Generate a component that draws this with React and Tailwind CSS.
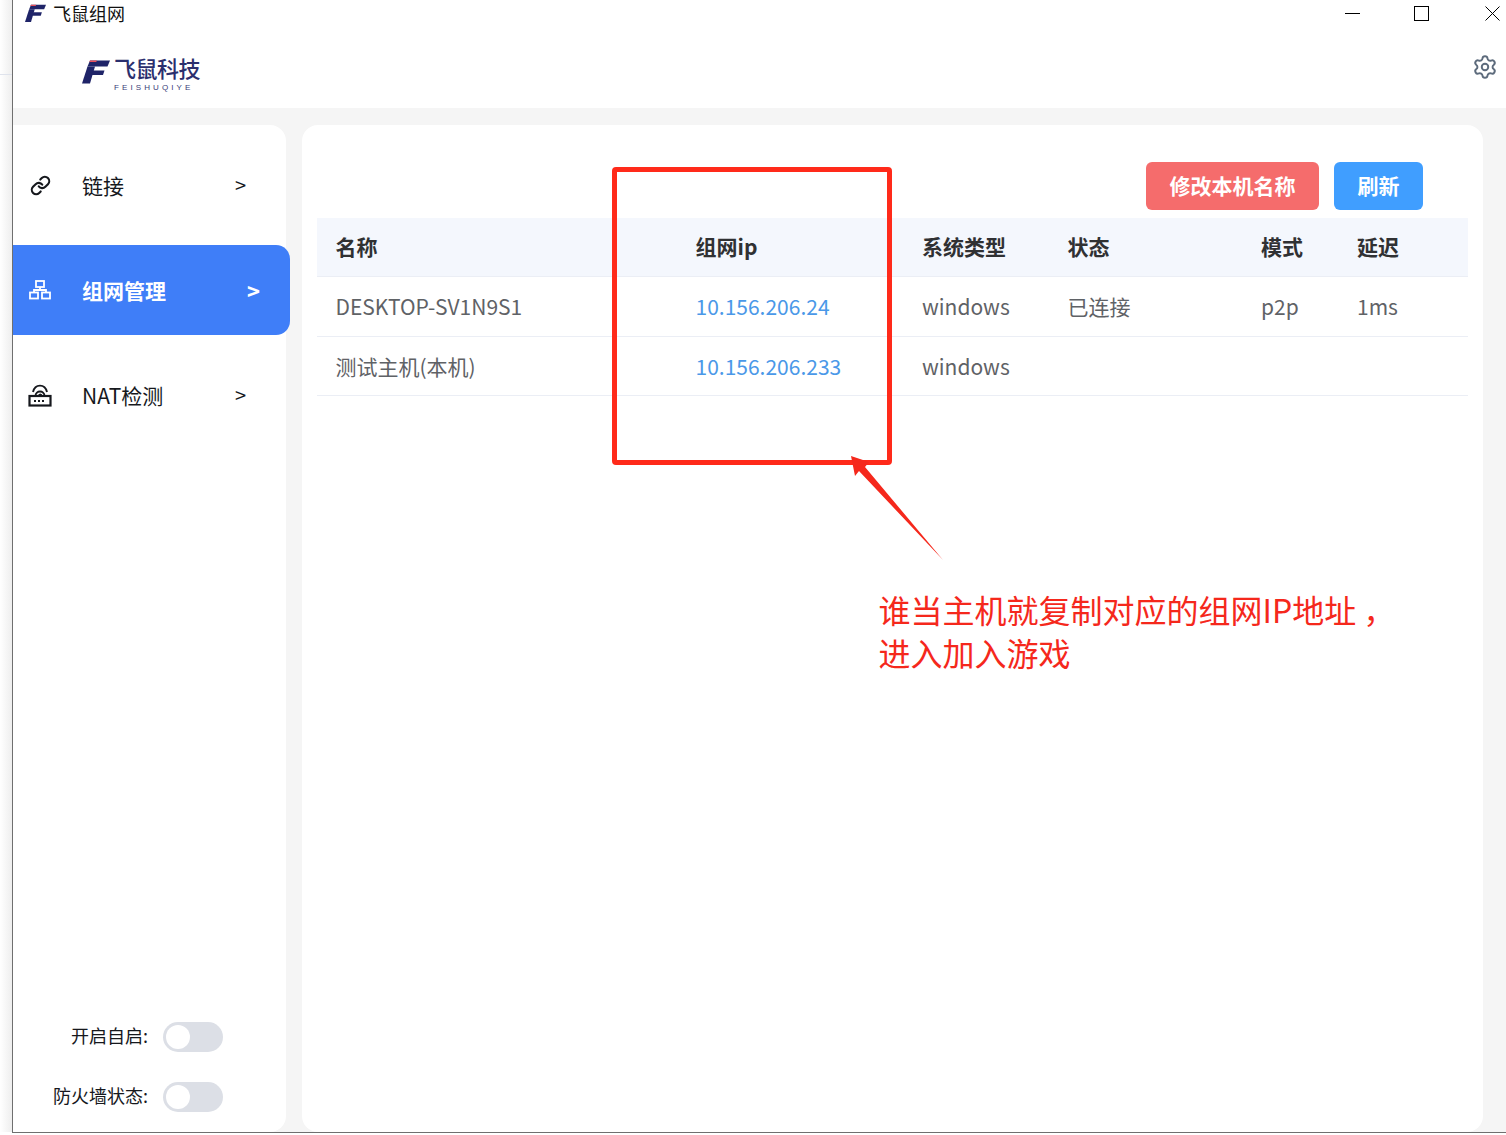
import { Link, Settings } from 'lucide-react'

const cjk = "font-['Noto_Sans_CJK_SC','Noto_Sans',sans-serif]"

const columns = ['w-[360px] pl-[18.5px]', 'w-[226px] pl-[18.5px]', 'w-[146px] pl-[19px]', 'w-[193px] pl-[18.5px]', 'w-[96px] pl-[19px]', 'w-[130px] pl-[19px]']
const headers = ['名称', '组网ip', '系统类型', '状态', '模式', '延迟']
const rows = [
  ['DESKTOP-SV1N9S1', '10.156.206.24', 'windows', '已连接', 'p2p', '1ms'],
  ['测试主机(本机)', '10.156.206.233', 'windows', '', '', ''],
]

function LogoMark({ className }) {
  return (
    <svg viewBox="0 0 28 24" className={className}>
      <path d="M8 1 L5.5 7 L25.5 7 L28 1 Z" fill="#1f2468" />
      <path d="M8 1 L15 1 L14.2 2.6 L7.3 2.6 Z" fill="#e8505b" />
      <path d="M5.5 7 L13 7 L8 24 L0 24 Z" fill="#1f2468" />
      <path d="M11 11 L22.5 11 L21 15.5 L9.5 15.5 Z" fill="#1f2468" />
    </svg>
  )
}

function NetworkIcon() {
  return (
    <svg viewBox="0 0 22 20" className="w-[22px] h-[20px]" fill="none" stroke="currentColor" strokeWidth="1.8">
      <rect x="7" y="1" width="8" height="6" />
      <rect x="1" y="12.5" width="8" height="6" />
      <rect x="13" y="12.5" width="8" height="6" />
      <path d="M11 7 V10 M5 12.5 V10 H17 V12.5" />
    </svg>
  )
}

function RouterIcon() {
  return (
    <svg viewBox="0 0 24 23" className="w-[24px] h-[23px]" fill="none" stroke="currentColor" strokeWidth="2.2">
      <rect x="1.5" y="12" width="21" height="9.5" />
      <path d="M7.5 12 C7.5 6 16.5 6 16.5 12 M11 12 C11 9.8 13.5 9.8 13.5 12 M5 8 C7 -0.5 17 -0.5 19 8" strokeWidth="1.9" />
      <path d="M6 17 H8 M10 17 H12 M14 17 H16" strokeWidth="1.8" />
    </svg>
  )
}

function NavItem({ icon, label, active }) {
  return (
    <div
      className={
        active
          ? 'flex items-center h-[90px] w-[277px] pl-[15px] rounded-r-[14px] bg-[#3f7ef8] text-white font-bold'
          : 'flex items-center h-[90px] w-[273px] pl-[15px] text-[#16181d]'
      }
    >
      <span className="w-[24px] flex justify-center">{icon}</span>
      <span className="ml-[30px] text-[21px] leading-none w-[151px]">{label}</span>
      <span className={active ? 'text-[22px] leading-none ml-[14px]' : 'text-[20px] leading-none ml-[2px]'}>&gt;</span>
    </div>
  )
}

function Toggle({ label }) {
  return (
    <div className="flex items-center justify-end h-[30px] w-[210px]">
      <span className="text-[18px] leading-none text-[#16181d] mr-[15px] pb-[4px]">{label}</span>
      <span className="w-[60px] h-[30px] rounded-full bg-[#dcdfe6] p-[3px] flex">
        <span className="w-[24px] h-[24px] rounded-full bg-white" />
      </span>
    </div>
  )
}

export default function App() {
  return (
    <div className={`${cjk} relative w-[1506px] h-[1135px] overflow-hidden bg-white flex`}>
      {/* window shadow on the left */}
      <div className="w-[12px] h-[1132px] flex flex-col bg-gradient-to-r from-white to-[#eeeeee]">
        <div className="h-[75px] border-b border-[#dfe3ec]" />
      </div>

      <div className="flex-1 h-[1133px] flex flex-col border-l border-b border-[#6f6f6f] bg-[#f5f5f5]">
        <div className="bg-white h-[108px] relative shrink-0">
          <div className="h-[26px] flex items-center">
            <LogoMark className="w-[21px] h-[18px] ml-[12px]" />
            <span className="ml-[7px] text-[18px] leading-none text-[#111]">飞鼠组网</span>
            <div className="ml-auto flex items-center text-black">
              <svg viewBox="0 0 15 1" className="w-[15px] h-[1px]"><rect width="15" height="1" fill="currentColor" /></svg>
              <svg viewBox="0 0 15 15" className="w-[15px] h-[15px] ml-[54px]" fill="none" stroke="currentColor"><rect x="0.5" y="0.5" width="14" height="14" /></svg>
              <svg viewBox="0 0 15 15" className="w-[15px] h-[15px] ml-[56px] mr-[6px]" fill="none" stroke="currentColor"><path d="M0.5 0.5 L14.5 14.5 M14.5 0.5 L0.5 14.5" /></svg>
            </div>
          </div>
          <div className="flex items-start pr-[8px]">
            <div className="ml-[69px] mt-[28px] flex">
              <LogoMark className="w-[28px] h-[25px] mt-[5px]" />
              <div className="ml-[4px] flex flex-col items-start">
                <span className="text-[22px] leading-[26px] font-medium text-[#2b2f6e] -tracking-[0.5px]">飞鼠科技</span>
                <span className="text-[8px] leading-[8px] tracking-[3.1px] text-[#3a3e78] mt-[4px] font-['Liberation_Sans',sans-serif]">FEISHUQIYE</span>
              </div>
            </div>
            <Settings className="ml-auto mt-[28px] w-[26px] h-[26px] text-[#5d6b7c]" strokeWidth={1.8} />
          </div>
        </div>

        <div className="flex-1 flex pt-[17px] min-h-0">
          <aside className="w-[273px] bg-white rounded-tr-[16px] rounded-br-[16px] flex flex-col pt-[15px] pb-[20px]">
            <div className="flex flex-col gap-[15px]">
              <NavItem icon={<Link className="w-[21px] h-[21px]" strokeWidth={2.4} />} label="链接" />
              <NavItem icon={<NetworkIcon />} label="组网管理" active />
              <NavItem icon={<RouterIcon />} label="NAT检测" />
            </div>
            <div className="mt-auto flex flex-col gap-[30px]">
              <Toggle label="开启自启:" />
              <Toggle label="防火墙状态:" />
            </div>
          </aside>

          <main className="ml-[16px] w-[1181px] bg-white rounded-t-[16px] rounded-b-[16px] px-[15px] pt-[37px]">
            <div className="flex justify-end gap-[15px] pr-[45px]">
              <button className="w-[173px] h-[48px] rounded-[6px] bg-[#f56c6c] text-white text-[21px] leading-none font-bold pb-[2px]">修改本机名称</button>
              <button className="w-[89px] h-[48px] rounded-[6px] bg-[#409eff] text-white text-[21px] leading-none font-bold pb-[2px]">刷新</button>
            </div>

            <table className="mt-[8px] w-[1151px] table-fixed border-collapse text-[21px]">
              <thead>
                <tr className="h-[58px] bg-[#f4f7fd] border-b border-[#ebeef5]">
                  {headers.map((h, i) => (
                    <th key={h} className={`${columns[i]} text-left font-bold text-[#303133]`}>{h}</th>
                  ))}
                </tr>
              </thead>
              <tbody>
                {rows.map((row, r) => (
                  <tr key={row[1]} className={`${r === 0 ? 'h-[60px]' : 'h-[59px]'} border-b border-[#ebeef5]`}>
                    {row.map((cell, i) => (
                      <td key={i} className={`${columns[i]} pt-[2px] font-normal ${i === 1 ? 'text-[#4a98e8]' : 'text-[#5f6266]'}`}>{cell}</td>
                    ))}
                  </tr>
                ))}
              </tbody>
            </table>
          </main>
        </div>
      </div>

      {/* red annotation drawn over the screenshot */}
      <div className="absolute left-[612px] top-[167px] w-[280px] h-[298px] border-[5px] border-[#ff2a1a] rounded-[4px]" />
      <svg className="absolute left-[845px] top-[450px] w-[105px] h-[115px]" viewBox="0 0 105 115">
        <polygon points="6,6 24,12 20,17 98,110 14,21 10,26" fill="#f5281c" />
      </svg>
      <div className="absolute left-[878.5px] top-[588px] text-[32px] leading-[43px] text-[#f5281c] whitespace-nowrap">
        <div>谁当主机就复制对应的组网IP地址 ，</div>
        <div>进入加入游戏</div>
      </div>
    </div>
  )
}
